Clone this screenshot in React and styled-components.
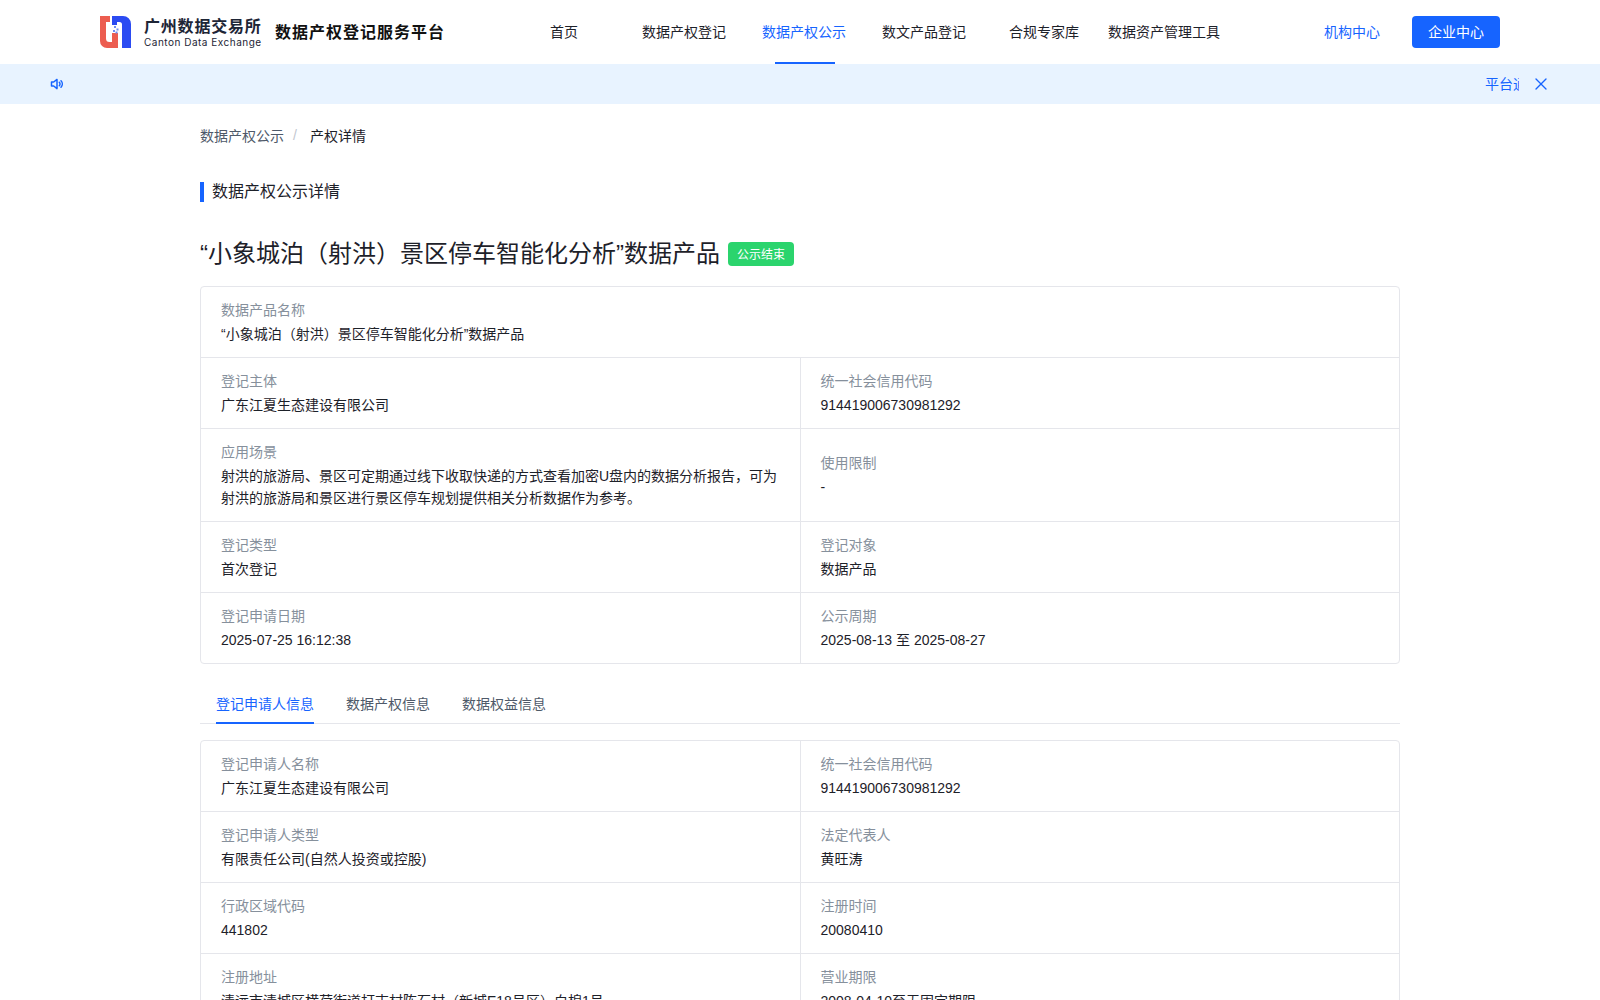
import React from "react";
import styled, { createGlobalStyle } from "styled-components";
import { X } from "lucide-react";

const Global = createGlobalStyle`
  html, body { margin: 0; padding: 0; height: 1000px; overflow: hidden; background: #fff; }
  body { font-family: "Liberation Sans", "Noto Sans CJK SC", sans-serif; font-size: 14px; color: #1d2129; }
`;

const Header = styled.header`
  height: 64px;
  display: flex;
  align-items: center;
  padding: 0 100px;
  background: #fff;
`;
const Brand = styled.div`
  display: flex;
  align-items: center;
  width: 404px;
  flex: none;
`;
const LogoText = styled.div`
  margin-left: 12px;
  display: flex;
  flex-direction: column;
  width: 118px;
  color: #1d2536;
`;
const LogoCn = styled.span`
  font-size: 16px;
  line-height: 19px;
  font-weight: 700;
  letter-spacing: 0.8px;
  padding-left: 1px;
  white-space: nowrap;
`;
const LogoEn = styled.span`
  font-family: "Inter", "Liberation Sans", sans-serif;
  font-size: 10px;
  line-height: 12px;
  letter-spacing: 0.5px;
  padding-left: 1px;
  white-space: nowrap;
`;
const PlatformName = styled.span`
  margin-left: 14px;
  padding-bottom: 2px;
  font-size: 16px;
  font-weight: 700;
  letter-spacing: 1px;
  color: #111;
  white-space: nowrap;
`;
const Nav = styled.nav`
  display: flex;
  height: 64px;
`;
const NavItem = styled.a`
  position: relative;
  width: 120px;
  box-sizing: border-box;
  padding-bottom: 2px;
  display: flex;
  align-items: center;
  justify-content: center;
  color: ${(p) => (p.$active ? "#1664ff" : "#1d2129")};
  white-space: nowrap;
  &::after {
    content: "";
    display: ${(p) => (p.$active ? "block" : "none")};
    position: absolute;
    left: 31px;
    right: 29px;
    bottom: 0;
    height: 2px;
    background: #1664ff;
  }
`;
const Actions = styled.div`
  margin-left: auto;
  display: flex;
  align-items: center;
  gap: 32px;
`;
const TextLink = styled.a`
  color: #1664ff;
  padding-bottom: 2px;
`;
const PrimaryButton = styled.button`
  width: 88px;
  height: 32px;
  padding: 0 0 2px;
  border: 0;
  border-radius: 4px;
  background: #1664ff;
  color: #fff;
  font: inherit;
`;
const Notice = styled.div`
  height: 40px;
  background: #e8f3ff;
  display: flex;
  align-items: center;
  padding: 0 49px 0 50px;
  color: #1664ff;
`;
const NoticeTrack = styled.div`
  flex: 1;
  margin-right: 12px;
  overflow: hidden;
  white-space: nowrap;
  padding: 0 0 2px 1421px;
  box-sizing: border-box;
  width: 0;
  min-width: 0;
`;
const CloseIcon = styled(X)`
  flex: none;
  color: #1664ff;
`;
const Main = styled.main`
  width: 1200px;
  margin: 0 auto;
`;
const Crumbs = styled.div`
  display: flex;
  align-items: center;
  height: 22px;
  margin-top: 20px;
  color: #4e5969;
`;
const CrumbSep = styled.span`
  margin: 0 13px 0 9px;
  color: #c2c7d0;
`;
const CrumbCurrent = styled.span`
  color: #1d2129;
`;
const SectionTitle = styled.h2`
  margin: 36px 0 0;
  height: 20px;
  border-left: 4px solid #1664ff;
  padding-left: 8px;
  font-size: 16px;
  font-weight: 400;
  line-height: 20px;
  color: #1d2129;
`;
const ProductHead = styled.div`
  display: flex;
  align-items: center;
  gap: 8px;
  margin-top: 36px;
  height: 32px;
`;
const ProductTitle = styled.h1`
  margin: 0;
  font-size: 24px;
  font-weight: 400;
  line-height: 32px;
  color: #1d2129;
  white-space: nowrap;
`;
const StatusTag = styled.span`
  width: 66px;
  height: 24px;
  box-sizing: border-box;
  padding-bottom: 2px;
  display: flex;
  align-items: center;
  justify-content: center;
  border-radius: 4px;
  background: #2bd46d;
  color: #fff;
  font-size: 12px;
`;
const Table = styled.div`
  display: grid;
  grid-template-columns: 1fr 1fr;
  margin-top: 16px;
  border: 1px solid #e5e6eb;
  border-radius: 4px;
`;
const Cell = styled.div`
  grid-column: ${(p) => (p.$wide ? "1 / 3" : "auto")};
  display: flex;
  flex-direction: column;
  justify-content: center;
  gap: 2px;
  min-width: 0;
  padding: 12px 20px 12px ${(p) => (p.$right ? "19.5px" : "20px")};
  border-top: ${(p) => (p.$first ? "0" : "1px solid #e5e6eb")};
  border-left: ${(p) => (p.$right ? "1px solid #e5e6eb" : "0")};
  line-height: 22px;
`;
const Label = styled.div`
  color: #86909c;
`;
const Value = styled.div`
  color: #1d2129;
`;
const Tabs = styled.div`
  display: flex;
  gap: 32px;
  height: 37px;
  margin-top: 22px;
  padding-left: 16px;
  border-bottom: 1px solid #e5e6eb;
`;
const Tab = styled.a`
  height: 38px;
  line-height: 36px;
  box-sizing: border-box;
  color: ${(p) => (p.$active ? "#1664ff" : "#4e5969")};
  border-bottom: 2px solid ${(p) => (p.$active ? "#1664ff" : "transparent")};
`;
const SpeakerIcon = styled.svg`
  flex: none;
`;
const LogoMark = styled.svg`
  flex: none;
`;

const Speaker = () => (
  <SpeakerIcon width="14" height="14" viewBox="0 0 14 14" fill="none" stroke="#1664ff" strokeWidth="1.5" strokeLinecap="round" strokeLinejoin="round">
    <path d="M1.5 5v4h2.2L7 11.6V2.4L3.7 5H1.5Z" />
    <path d="M9.3 5.3a2.4 2.4 0 0 1 0 3.4" />
    <path d="M11 3.8a4.6 4.6 0 0 1 0 6.4" />
  </SpeakerIcon>
);

const Logo = () => (
  <LogoMark width="31" height="32" viewBox="0 0 31 32">
    <path d="M0 0H10V6H6V22.5a3.5 3.5 0 0 0 3.5 3.5H12V17H18V32H7a7 7 0 0 1-7-7Z" fill="#ec5d50" />
    <path d="M12 0H23a8 8 0 0 1 8 8V32H22V8.5A2.5 2.5 0 0 0 19.5 6H17V9H12Z" fill="#2b4bf2" />
    <g fill="#6f8df2">
      <rect x="14" y="10" width="2" height="2" />
      <rect x="16.5" y="12.5" width="2" height="2" />
      <rect x="13" y="14" width="2" height="2" />
      <rect x="15.5" y="15.5" width="2" height="2" />
    </g>
  </LogoMark>
);

const Info = ({ rows }) => (
  <Table>
    {rows.flatMap((row, r) =>
      row.map(([label, value], c) => (
        <Cell key={`${r}-${c}`} $wide={row.length === 1} $first={r === 0} $right={c === 1}>
          <Label>{label}</Label>
          <Value>{value}</Value>
        </Cell>
      ))
    )}
  </Table>
);

const productRows = [
  [["数据产品名称", "“小象城泊（射洪）景区停车智能化分析”数据产品"]],
  [["登记主体", "广东江夏生态建设有限公司"], ["统一社会信用代码", "914419006730981292"]],
  [
    ["应用场景", "射洪的旅游局、景区可定期通过线下收取快递的方式查看加密U盘内的数据分析报告，可为射洪的旅游局和景区进行景区停车规划提供相关分析数据作为参考。"],
    ["使用限制", "-"],
  ],
  [["登记类型", "首次登记"], ["登记对象", "数据产品"]],
  [["登记申请日期", "2025-07-25 16:12:38"], ["公示周期", "2025-08-13 至 2025-08-27"]],
];

const applicantRows = [
  [["登记申请人名称", "广东江夏生态建设有限公司"], ["统一社会信用代码", "914419006730981292"]],
  [["登记申请人类型", "有限责任公司(自然人投资或控股)"], ["法定代表人", "黄旺涛"]],
  [["行政区域代码", "441802"], ["注册时间", "20080410"]],
  [["注册地址", "清远市清城区横荷街道打吉村陈石村（新城E18号区）白棉1号"], ["营业期限", "2008-04-10至无固定期限"]],
];

const navItems = ["首页", "数据产权登记", "数据产权公示", "数文产品登记", "合规专家库", "数据资产管理工具"];

export default function App() {
  return (
    <>
      <Global />
      <Header>
        <Brand>
          <Logo />
          <LogoText>
            <LogoCn>广州数据交易所</LogoCn>
            <LogoEn>Canton Data Exchange</LogoEn>
          </LogoText>
          <PlatformName>数据产权登记服务平台</PlatformName>
        </Brand>
        <Nav>
          {navItems.map((n) => (
            <NavItem key={n} $active={n === "数据产权公示"}>{n}</NavItem>
          ))}
        </Nav>
        <Actions>
          <TextLink>机构中心</TextLink>
          <PrimaryButton>企业中心</PrimaryButton>
        </Actions>
      </Header>
      <Notice>
        <Speaker />
        <NoticeTrack>平台通知</NoticeTrack>
        <CloseIcon size={20} strokeWidth={1.6} />
      </Notice>
      <Main>
        <Crumbs>
          <span>数据产权公示</span>
          <CrumbSep>/</CrumbSep>
          <CrumbCurrent>产权详情</CrumbCurrent>
        </Crumbs>
        <SectionTitle>数据产权公示详情</SectionTitle>
        <ProductHead>
          <ProductTitle>“小象城泊（射洪）景区停车智能化分析”数据产品</ProductTitle>
          <StatusTag>公示结束</StatusTag>
        </ProductHead>
        <Info rows={productRows} />
        <Tabs>
          <Tab $active>登记申请人信息</Tab>
          <Tab>数据产权信息</Tab>
          <Tab>数据权益信息</Tab>
        </Tabs>
        <Info rows={applicantRows} />
      </Main>
    </>
  );
}
